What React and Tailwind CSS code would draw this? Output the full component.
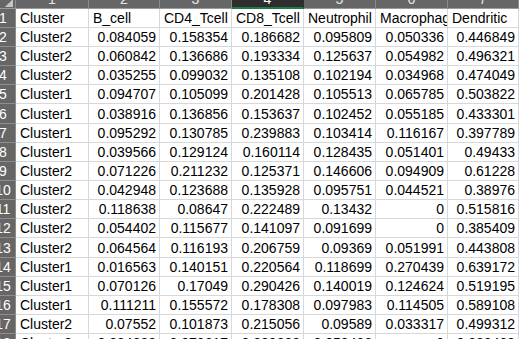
const columns = [
  { n: '1', w: 'w-[73px]' },
  { n: '2', w: 'w-[71px]' },
  { n: '3', w: 'w-[72px]' },
  { n: '4', w: 'w-[72px]', active: true },
  { n: '5', w: 'w-[72px]' },
  { n: '6', w: 'w-[72px]' },
  { n: '7', w: 'w-[71px]' },
]

const rows = [
  ['Cluster', 'B_cell', 'CD4_Tcell', 'CD8_Tcell', 'Neutrophil', 'Macrophage', 'Dendritic'],
  ['Cluster2', '0.084059', '0.158354', '0.186682', '0.095809', '0.050336', '0.446849'],
  ['Cluster2', '0.060842', '0.136686', '0.193334', '0.125637', '0.054982', '0.496321'],
  ['Cluster2', '0.035255', '0.099032', '0.135108', '0.102194', '0.034968', '0.474049'],
  ['Cluster1', '0.094707', '0.105099', '0.201428', '0.105513', '0.065785', '0.503822'],
  ['Cluster1', '0.038916', '0.136856', '0.153637', '0.102452', '0.055185', '0.433301'],
  ['Cluster1', '0.095292', '0.130785', '0.239883', '0.103414', '0.116167', '0.397789'],
  ['Cluster1', '0.039566', '0.129124', '0.160114', '0.128435', '0.051401', '0.49433'],
  ['Cluster2', '0.071226', '0.211232', '0.125371', '0.146606', '0.094909', '0.61228'],
  ['Cluster2', '0.042948', '0.123688', '0.135928', '0.095751', '0.044521', '0.38976'],
  ['Cluster2', '0.118638', '0.08647', '0.222489', '0.13432', '0', '0.515816'],
  ['Cluster2', '0.054402', '0.115677', '0.141097', '0.091699', '0', '0.385409'],
  ['Cluster2', '0.064564', '0.116193', '0.206759', '0.09369', '0.051991', '0.443808'],
  ['Cluster1', '0.016563', '0.140151', '0.220564', '0.118699', '0.270439', '0.639172'],
  ['Cluster1', '0.070126', '0.17049', '0.290426', '0.140019', '0.124624', '0.519195'],
  ['Cluster1', '0.111211', '0.155572', '0.178308', '0.097983', '0.114505', '0.589108'],
  ['Cluster2', '0.07552', '0.101873', '0.215056', '0.09589', '0.033317', '0.499312'],
  ['Cluster2', '0.034883', '0.072617', '0.209233', '0.053426', '0', '0.322439'],
]

export default function App() {
  return (
    <div className="w-[519px] h-[339px] overflow-hidden bg-white font-['Liberation_Sans',Arial,sans-serif] text-[14px] text-black">
      {/* column header, clipped at the top */}
      <div className="flex h-[9px]">
        <div className="relative w-[16px] shrink-0 bg-[#666666] border-r border-[#8a8a8a] border-b border-b-[#9a9a9a] overflow-hidden">
          <div className="absolute right-[2px] bottom-[1px] w-0 h-0 border-l-[8px] border-l-transparent border-b-[8px] border-b-[#c6c6c6]" />
        </div>
        {columns.map((c) => (
          <div
            key={c.n}
            className={`${c.w} shrink-0 overflow-hidden text-center border-r ${
              c.active
                ? 'bg-[#2e2e2e] text-white border-[#2e2e2e] border-b-2 border-b-[#1f7a4a]'
                : 'bg-[#666666] text-[#e6e6e6] border-[#8a8a8a] border-b border-b-[#9a9a9a]'
            }`}
          >
            <div className="-mt-[9px] leading-[16px]">{c.n}</div>
          </div>
        ))}
      </div>

      {/* rows */}
      {rows.map((r, i) => (
        <div key={i} className={`flex ${i === 5 || i === 12 ? 'h-[20px]' : 'h-[19px]'}`}>
          <div className="w-[16px] shrink-0 overflow-hidden bg-[#666666] text-white border-b border-[#8e8e8e] border-r border-r-[#8a8a8a] flex items-center">
            <div className="w-[24px] shrink-0 -ml-[9px] text-center leading-[18px]">{i + 1}</div>
          </div>
          {r.map((v, j) => {
            const isNum = i > 0 && j > 0
            return (
              <div
                key={j}
                className={`${columns[j].w} shrink-0 overflow-hidden whitespace-nowrap border-b border-r border-[#d8d8d8] px-[3px] flex items-center ${
                  isNum ? 'justify-end' : 'justify-start pl-[4px]'
                }`}
              >
                <span className="leading-[18px]">{v}</span>
              </div>
            )
          })}
        </div>
      ))}
    </div>
  )
}
